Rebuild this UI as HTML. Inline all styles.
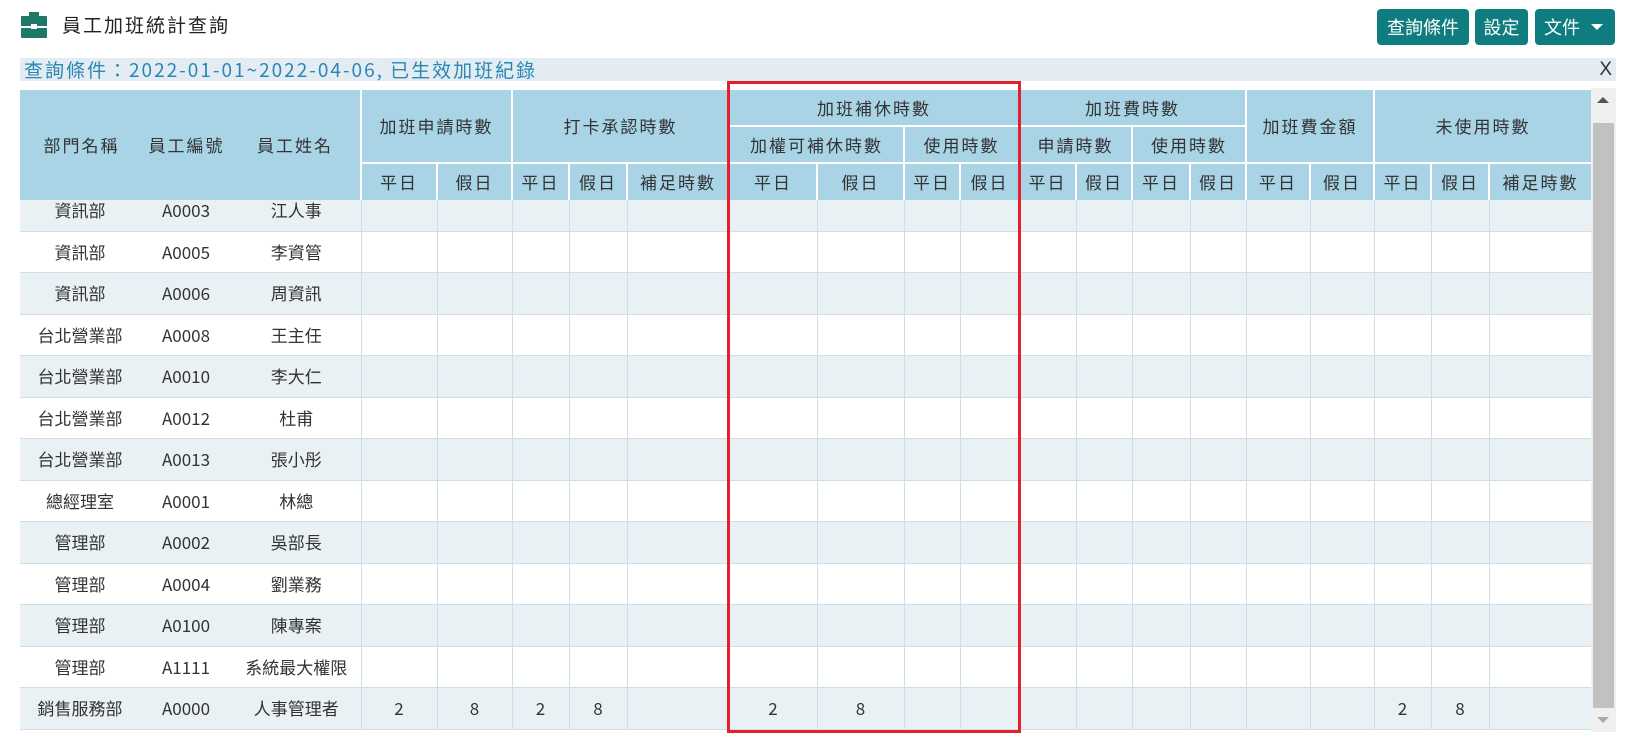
<!DOCTYPE html>
<html><head><meta charset="utf-8"><style>
*{box-sizing:border-box;margin:0;padding:0}
body{width:1636px;height:738px;background:#fff;font-family:"Noto Sans CJK TC",sans-serif;color:#333;position:relative;overflow:hidden}
.title{position:absolute;left:62px;top:10px;font-size:19px;letter-spacing:2px;color:#222;line-height:30px}
.btn{position:absolute;top:9px;height:36px;background:#0f7d80;color:#fff;border-radius:4px;font-size:18px;line-height:36px;text-align:center}
.bar{position:absolute;left:20px;top:58px;width:1596px;height:23px;background:#e3ecf3;color:#2a86b4;font-size:19px;line-height:23px;padding-left:4px;letter-spacing:2px;white-space:nowrap}
.x{position:absolute;right:4px;top:0;color:#333;font-family:"Liberation Sans",sans-serif;letter-spacing:0}
table{border-collapse:collapse;table-layout:fixed;width:1571px}
.head{position:absolute;left:20px;top:88px}
.head td{background:#a8d4e6;border:2px solid #fff;text-align:center;font-size:17px;letter-spacing:2px;color:#333;line-height:20px}
.head tr.r1 td,.head tr.r2 td{height:37px}
.head tr.r3 td{height:38px}
.body{position:absolute;left:20px;top:200px;width:1571px;height:532px;overflow:hidden}
.body table{margin-top:-11px}
.body td{height:41.5px;border:1px solid #cfdfe8;text-align:center;font-size:17px;color:#333;line-height:20px}
.body tr:nth-child(odd) td{background:#e9f1f4}
.body td.n{border-left:none;border-right:none}
.red{position:absolute;left:727px;top:81px;width:294px;height:652px;border:3px solid #e5202b}
.sb{position:absolute;left:1591px;top:88px;width:25px;height:644px;background:#f0f0f0}
.th{position:absolute;left:2px;top:35px;width:21px;height:585px;background:#c1c1c1}
</style></head><body>
<svg style="position:absolute;left:21px;top:12px" width="26" height="26" viewBox="0 0 26 26"><rect x="8" y="0" width="10" height="5" fill="#1e7a68"/><rect x="0" y="4" width="26" height="22" rx="1" fill="#1e7a68"/><rect x="0" y="14" width="26" height="2" fill="#fff"/><rect x="10" y="12" width="6" height="5" fill="#fff"/></svg>
<div class="title">員工加班統計查詢</div>
<div class="btn" style="left:1377px;width:92px">查詢條件</div>
<div class="btn" style="left:1475px;width:53px">設定</div>
<div class="btn" style="left:1535px;width:80px;text-align:left;padding-left:9px">文件<span style="position:absolute;right:12px;top:15px;width:0;height:0;border-left:6px solid transparent;border-right:6px solid transparent;border-top:6px solid #fff"></span></div>
<div class="bar">查詢條件：2022-01-01~2022-04-06, 已生效加班紀錄<span class="x">X</span></div>
<table class="head"><colgroup><col style="width:120px"><col style="width:92px"><col style="width:129px"><col style="width:76px"><col style="width:75px"><col style="width:57px"><col style="width:58px"><col style="width:102px"><col style="width:88px"><col style="width:87px"><col style="width:56px"><col style="width:59px"><col style="width:57px"><col style="width:56px"><col style="width:58px"><col style="width:56px"><col style="width:64px"><col style="width:64px"><col style="width:57px"><col style="width:58px"><col style="width:102px"></colgroup>
<tr class="r1"><td rowspan="3" colspan="3" style="border-left:none"><span style="display:inline-block;width:118px">部門名稱</span><span style="display:inline-block;width:92px">員工編號</span><span style="display:inline-block;width:125px">員工姓名</span></td><td colspan="2" rowspan="2">加班申請時數</td><td colspan="3" rowspan="2">打卡承認時數</td><td colspan="4">加班補休時數</td><td colspan="4">加班費時數</td><td colspan="2" rowspan="2">加班費金額</td><td colspan="3" rowspan="2" style="border-right:none">未使用時數</td></tr>
<tr class="r2"><td colspan="2">加權可補休時數</td><td colspan="2">使用時數</td><td colspan="2">申請時數</td><td colspan="2">使用時數</td></tr>
<tr class="r3"><td>平日</td><td>假日</td><td>平日</td><td>假日</td><td>補足時數</td><td>平日</td><td>假日</td><td>平日</td><td>假日</td><td>平日</td><td>假日</td><td>平日</td><td>假日</td><td>平日</td><td>假日</td><td>平日</td><td>假日</td><td style="border-right:none">補足時數</td></tr>
</table>
<div class="body"><table><colgroup><col style="width:120px"><col style="width:92px"><col style="width:129px"><col style="width:76px"><col style="width:75px"><col style="width:57px"><col style="width:58px"><col style="width:102px"><col style="width:88px"><col style="width:87px"><col style="width:56px"><col style="width:59px"><col style="width:57px"><col style="width:56px"><col style="width:58px"><col style="width:56px"><col style="width:64px"><col style="width:64px"><col style="width:57px"><col style="width:58px"><col style="width:102px"></colgroup>
<tr><td class="n">資訊部</td><td class="n">A0003</td><td class="n">江人事</td><td></td><td></td><td></td><td></td><td></td><td></td><td></td><td></td><td></td><td></td><td></td><td></td><td></td><td></td><td></td><td></td><td></td><td></td></tr>
<tr><td class="n">資訊部</td><td class="n">A0005</td><td class="n">李資管</td><td></td><td></td><td></td><td></td><td></td><td></td><td></td><td></td><td></td><td></td><td></td><td></td><td></td><td></td><td></td><td></td><td></td><td></td></tr>
<tr><td class="n">資訊部</td><td class="n">A0006</td><td class="n">周資訊</td><td></td><td></td><td></td><td></td><td></td><td></td><td></td><td></td><td></td><td></td><td></td><td></td><td></td><td></td><td></td><td></td><td></td><td></td></tr>
<tr><td class="n">台北營業部</td><td class="n">A0008</td><td class="n">王主任</td><td></td><td></td><td></td><td></td><td></td><td></td><td></td><td></td><td></td><td></td><td></td><td></td><td></td><td></td><td></td><td></td><td></td><td></td></tr>
<tr><td class="n">台北營業部</td><td class="n">A0010</td><td class="n">李大仁</td><td></td><td></td><td></td><td></td><td></td><td></td><td></td><td></td><td></td><td></td><td></td><td></td><td></td><td></td><td></td><td></td><td></td><td></td></tr>
<tr><td class="n">台北營業部</td><td class="n">A0012</td><td class="n">杜甫</td><td></td><td></td><td></td><td></td><td></td><td></td><td></td><td></td><td></td><td></td><td></td><td></td><td></td><td></td><td></td><td></td><td></td><td></td></tr>
<tr><td class="n">台北營業部</td><td class="n">A0013</td><td class="n">張小彤</td><td></td><td></td><td></td><td></td><td></td><td></td><td></td><td></td><td></td><td></td><td></td><td></td><td></td><td></td><td></td><td></td><td></td><td></td></tr>
<tr><td class="n">總經理室</td><td class="n">A0001</td><td class="n">林總</td><td></td><td></td><td></td><td></td><td></td><td></td><td></td><td></td><td></td><td></td><td></td><td></td><td></td><td></td><td></td><td></td><td></td><td></td></tr>
<tr><td class="n">管理部</td><td class="n">A0002</td><td class="n">吳部長</td><td></td><td></td><td></td><td></td><td></td><td></td><td></td><td></td><td></td><td></td><td></td><td></td><td></td><td></td><td></td><td></td><td></td><td></td></tr>
<tr><td class="n">管理部</td><td class="n">A0004</td><td class="n">劉業務</td><td></td><td></td><td></td><td></td><td></td><td></td><td></td><td></td><td></td><td></td><td></td><td></td><td></td><td></td><td></td><td></td><td></td><td></td></tr>
<tr><td class="n">管理部</td><td class="n">A0100</td><td class="n">陳專案</td><td></td><td></td><td></td><td></td><td></td><td></td><td></td><td></td><td></td><td></td><td></td><td></td><td></td><td></td><td></td><td></td><td></td><td></td></tr>
<tr><td class="n">管理部</td><td class="n">A1111</td><td class="n">系統最大權限</td><td></td><td></td><td></td><td></td><td></td><td></td><td></td><td></td><td></td><td></td><td></td><td></td><td></td><td></td><td></td><td></td><td></td><td></td></tr>
<tr><td class="n">銷售服務部</td><td class="n">A0000</td><td class="n">人事管理者</td><td>2</td><td>8</td><td>2</td><td>8</td><td></td><td>2</td><td>8</td><td></td><td></td><td></td><td></td><td></td><td></td><td></td><td></td><td>2</td><td>8</td><td></td></tr>
</table></div>
<div class="red"></div>
<div class="sb"><div style="position:absolute;left:6px;top:9px;border-left:6px solid transparent;border-right:6px solid transparent;border-bottom:6px solid #555"></div><div class="th"></div><div style="position:absolute;left:6px;bottom:9px;border-left:6px solid transparent;border-right:6px solid transparent;border-top:6px solid #aaa"></div></div>
</body></html>
